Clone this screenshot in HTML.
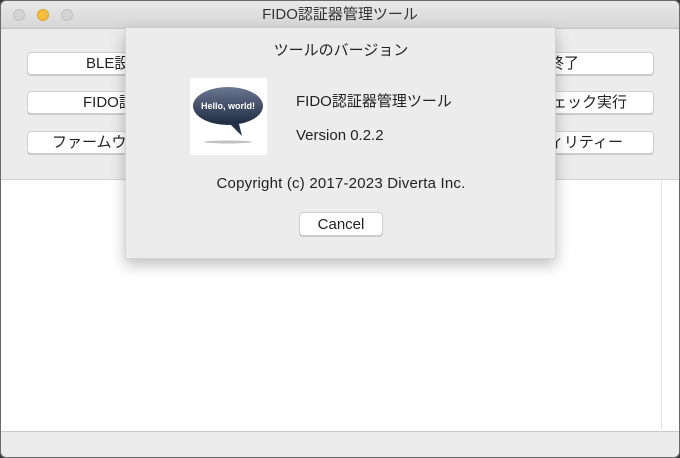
<!DOCTYPE html>
<html><head><meta charset="utf-8"><style>
*{margin:0;padding:0;box-sizing:border-box}
body{width:680px;height:458px;background:#3a3a3a;font-family:"Liberation Sans","Noto Sans CJK JP",sans-serif;position:relative;overflow:hidden}
.win{position:absolute;left:0;top:0;width:680px;height:458px;border-radius:6px;background:#ececec;border:1px solid #6a6a6a;overflow:hidden}
.tb{position:absolute;left:0;top:0;width:100%;height:28px;background:linear-gradient(#e8e8e8,#d6d6d6);border-bottom:1px solid #c4c4c4;text-align:center;font-size:15px;line-height:28px;color:#333}
.dot{position:absolute;top:8px;width:12px;height:12px;border-radius:50%;background:#d4d4d4;border:1px solid #c0c0c0}
.btn{position:absolute;height:23px;background:#fff;border:1px solid #cfcfcf;border-radius:4px;font-size:15px;line-height:22px;text-align:center;color:#222;box-shadow:0 1px 0 #c8c8c8}
.ta{position:absolute;left:0;top:178px;width:679px;height:253px;background:#fff;border-top:1px solid #d0d0d0;border-bottom:1px solid #c8c8c8}
.dlg{position:absolute;left:124px;top:27px;width:431px;height:231px;background:#ececec;box-shadow:0 6px 14px rgba(0,0,0,.25);border:1px solid #d4d4d4;border-top:none}
.t{position:absolute;font-size:15px;color:#222;white-space:nowrap}
</style></head><body>
<div class="win">
<div class="tb">FIDO認証器管理ツール</div>
<div class="dot" style="left:12px"></div>
<div class="dot" style="left:36px;background:#f5bd3a;border-color:#dfa52a"></div>
<div class="dot" style="left:60px"></div>
<div class="btn" style="left:26px;top:51px;width:200px;text-align:left;padding-left:58px">BLE設定</div>
<div class="btn" style="left:26px;top:90px;width:200px;text-align:left;padding-left:55px">FIDO認証</div>
<div class="btn" style="left:26px;top:130px;width:200px;text-align:left;padding-left:24px">ファームウェア</div>
<div class="btn" style="left:453px;top:51px;width:200px;text-align:right;padding-right:74px">終了</div>
<div class="btn" style="left:453px;top:90px;width:200px;text-align:right;padding-right:26px">チェック実行</div>
<div class="btn" style="left:453px;top:130px;width:200px;text-align:right;padding-right:30px">ティリティー</div>
<div class="ta"><div style="position:absolute;left:660px;top:0;width:1px;height:252px;background:#e2e2e2"></div></div>
<div class="dlg">
<div class="t" style="left:0;width:430px;text-align:center;top:11px">ツールのバージョン</div>
<div style="position:absolute;left:64px;top:50px;width:77px;height:77px;background:#fff">
<svg width="77" height="77" viewBox="0 0 77 77"><defs><linearGradient id="g" x1="0" y1="0" x2="0" y2="1"><stop offset="0" stop-color="#6a7690"/><stop offset="1" stop-color="#1e2a40"/></linearGradient></defs>
<ellipse cx="38" cy="28" rx="35" ry="19" fill="url(#g)"/><path d="M38 44 L52 58 L48 42 Z" fill="#22304a"/>
<ellipse cx="38" cy="64" rx="24" ry="1.5" fill="#999" opacity=".6"/>
<text x="38" y="31" font-size="9" font-weight="bold" fill="#fff" text-anchor="middle" font-family="Liberation Sans,sans-serif">Hello, world!</text></svg></div>
<div class="t" style="left:170px;top:62px">FIDO認証器管理ツール</div>
<div class="t" style="left:170px;top:99px">Version 0.2.2</div>
<div class="t" style="left:0;width:430px;text-align:center;top:147px;letter-spacing:.2px">Copyright (c) 2017-2023 Diverta Inc.</div>
<div class="btn" style="left:173px;top:184px;width:84px;height:24px;line-height:23px">Cancel</div>
</div>
</div>
</body></html>
